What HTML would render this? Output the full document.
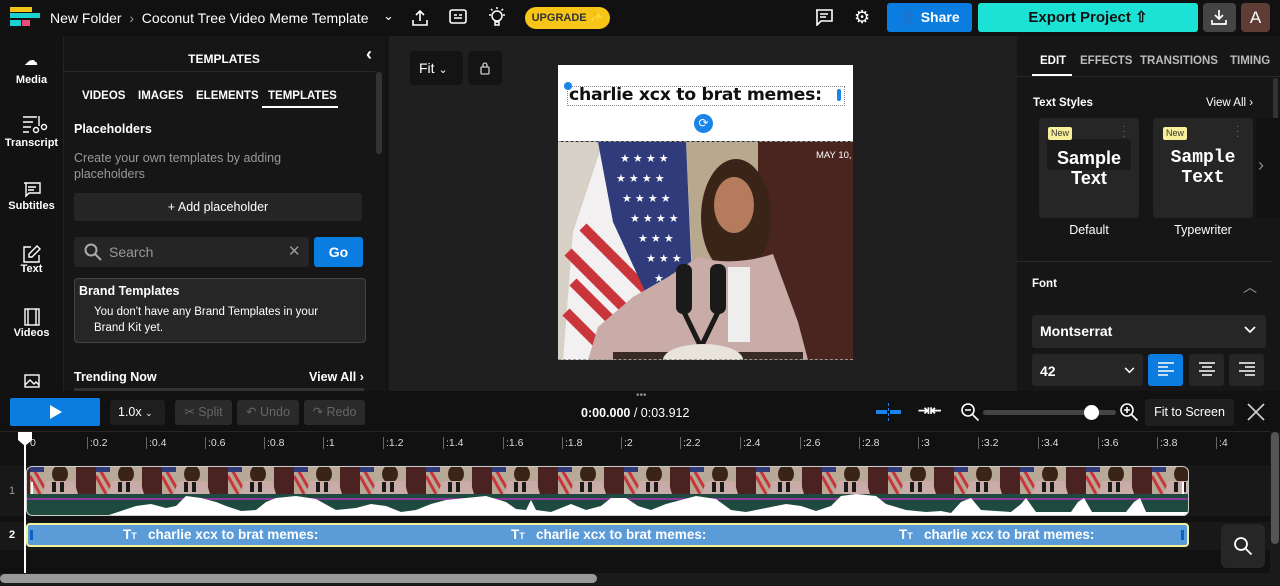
<!DOCTYPE html>
<html><head><meta charset="utf-8">
<style>
*{margin:0;padding:0;box-sizing:border-box}
body{width:1280px;height:586px;overflow:hidden;background:#111;font-family:"Liberation Sans",sans-serif;color:#fff;position:relative}
.a{position:absolute}
.b{font-weight:bold}
.t{white-space:nowrap}
</style></head><body>
<div class="a" style="left:0;top:0;width:1280px;height:36px;background:#111"></div>
<div class="a" style="left:10px;top:7px;width:22px;height:5px;background:#f2c318"></div>
<div class="a" style="left:10px;top:13px;width:30px;height:5px;background:#1ad3d1"></div>
<div class="a" style="left:10px;top:20px;width:11px;height:6px;background:#1ad3d1"></div>
<div class="a" style="left:22px;top:20px;width:8px;height:6px;background:#ef4a7b"></div>
<div class="a t" style="left:50px;top:10px;font-size:14px">New Folder <span style="color:#999">&nbsp;›&nbsp;</span> Coconut Tree Video Meme Template</div>
<div class="a" style="left:383px;top:8px;font-size:13px">⌄</div>
<svg class="a" style="left:410px;top:8px" width="20" height="20" viewBox="0 0 20 20" fill="none" stroke="#fff" stroke-width="1.6"><path d="M10 13V3M6 7l4-4 4 4M3 12v5h14v-5"/></svg>
<svg class="a" style="left:449px;top:9px" width="18" height="16" viewBox="0 0 18 16" fill="none" stroke="#fff" stroke-width="1.6"><rect x="1" y="1" width="16" height="13" rx="2"/><path d="M5 9h8M5 6h3M10 6h3"/></svg>
<svg class="a" style="left:487px;top:6px" width="20" height="22" viewBox="0 0 20 22" fill="none" stroke="#fff" stroke-width="1.5"><circle cx="10" cy="10" r="5"/><path d="M8 16h4v3h-4zM10 1v2M2 9h2M16 9h2M4 3l1.5 1.5M16 3l-1.5 1.5"/></svg>
<div class="a b" style="left:525px;top:7px;width:85px;height:22px;border-radius:11px;background:#f7c418;color:#333;font-size:11px;text-align:center;line-height:22px">UPGRADE ✨</div>
<svg class="a" style="left:815px;top:9px" width="18" height="17" viewBox="0 0 18 17" fill="none" stroke="#fff" stroke-width="1.6"><path d="M1 1h16v11H6l-4 4V1zM5 5h8M5 8h6"/></svg>
<div class="a" style="left:854px;top:7px;font-size:18px">⚙</div>
<div class="a b" style="left:887px;top:3px;width:85px;height:29px;border-radius:3px;background:#0b7de0;font-size:14px;line-height:29px;text-align:center">👤 Share</div>
<div class="a b" style="left:978px;top:3px;width:220px;height:29px;border-radius:3px;background:#1ce2d6;color:#111;font-size:15px;line-height:29px;text-align:center">Export Project ⇧</div>
<div class="a" style="left:1203px;top:3px;width:33px;height:29px;border-radius:4px;background:#444"></div>
<svg class="a" style="left:1210px;top:8px" width="18" height="18" viewBox="0 0 18 18" fill="none" stroke="#fff" stroke-width="1.7"><path d="M9 2v9M5 7l4 4 4-4M2 12v4h14v-4"/></svg>
<div class="a" style="left:1241px;top:3px;width:29px;height:29px;border-radius:4px;background:#5e3d34;text-align:center;line-height:29px;font-size:17px">A</div>

<div class="a" style="left:0;top:36px;width:63px;height:355px;background:#121212"></div>
<div class="a b" style="left:0;top:74px;width:63px;text-align:center;font-size:11px">Media</div>
<div class="a" style="left:24px;top:52px;font-size:14px">☁</div>
<div class="a b" style="left:0;top:137px;width:63px;text-align:center;font-size:11px">Transcript</div>
<svg class="a" style="left:22px;top:115px" width="26" height="20" viewBox="0 0 26 20" fill="none" stroke="#fff" stroke-width="1.4"><path d="M1 2h14M1 7h10M1 12h8M1 17h6M17 1v10"/><circle cx="14" cy="15" r="2.5"/><circle cx="22" cy="12" r="2.5"/></svg>
<div class="a b" style="left:0;top:200px;width:63px;text-align:center;font-size:11px">Subtitles</div>
<svg class="a" style="left:23px;top:182px" width="18" height="16" viewBox="0 0 18 16" fill="none" stroke="#fff" stroke-width="1.4"><path d="M1 1h16v10H6l-3 3V1zM5 5h8M5 8h6"/></svg>
<div class="a b" style="left:0;top:263px;width:63px;text-align:center;font-size:11px">Text</div>
<svg class="a" style="left:23px;top:245px" width="18" height="18" viewBox="0 0 18 18" fill="none" stroke="#fff" stroke-width="1.4"><path d="M8 2H1v15h15V10M14 1l3 3-8 8H6V9z"/></svg>
<div class="a b" style="left:0;top:327px;width:63px;text-align:center;font-size:11px">Videos</div>
<svg class="a" style="left:24px;top:308px" width="16" height="18" viewBox="0 0 16 18" fill="none" stroke="#fff" stroke-width="1.4"><rect x="1" y="1" width="14" height="16"/><path d="M4 1v16M12 1v16"/></svg>
<svg class="a" style="left:24px;top:374px" width="16" height="14" viewBox="0 0 16 14" fill="none" stroke="#fff" stroke-width="1.4"><rect x="1" y="1" width="14" height="12"/><path d="M1 11l5-5 4 4 2-2 3 3"/></svg>

<div class="a" style="left:63px;top:36px;width:322px;height:355px;background:#161616;border-left:1px solid #222"></div>
<div class="a b" style="left:63px;top:52px;width:322px;text-align:center;font-size:12px">TEMPLATES</div>
<div class="a b" style="left:366px;top:44px;font-size:18px">‹</div>
<div class="a" style="left:63px;top:71px;width:312px;height:1px;background:#2a2a2a"></div>
<div class="a" style="left:376px;top:72px;width:6px;height:82px;border-radius:3px;background:#333"></div>
<div class="a b t" style="left:82px;top:90px;font-size:11.5px">VIDEOS</div>
<div class="a b t" style="left:138px;top:90px;font-size:11.5px">IMAGES</div>
<div class="a b t" style="left:196px;top:90px;font-size:11.5px">ELEMENTS</div>
<div class="a b t" style="left:268px;top:90px;font-size:11.5px">TEMPLATES</div>
<div class="a" style="left:262px;top:106px;width:76px;height:2px;background:#fff"></div>
<div class="a b" style="left:74px;top:122px;font-size:12.5px">Placeholders</div>
<div class="a" style="left:74px;top:150px;font-size:12.5px;color:#999;line-height:16px;width:240px">Create your own templates by adding placeholders</div>
<div class="a" style="left:74px;top:193px;width:288px;height:28px;background:#252525;border-radius:3px;text-align:center;line-height:28px;font-size:12.5px">+ Add placeholder</div>
<div class="a" style="left:74px;top:237px;width:235px;height:30px;background:#252525;border-radius:3px"></div>
<svg class="a" style="left:84px;top:243px" width="18" height="18" viewBox="0 0 18 18" fill="none" stroke="#aaa" stroke-width="2"><circle cx="7" cy="7" r="5.5"/><path d="M11 11l6 6"/></svg>
<div class="a" style="left:109px;top:244px;font-size:14px;color:#999">Search</div>
<div class="a" style="left:288px;top:242px;font-size:15px;color:#999">✕</div>
<div class="a b" style="left:314px;top:237px;width:49px;height:30px;background:#0b7de0;border-radius:3px;text-align:center;line-height:30px;font-size:14px">Go</div>
<div class="a" style="left:74px;top:278px;width:292px;height:65px;background:#262626;border:1px solid #444;border-radius:4px"></div>
<div class="a b" style="left:79px;top:284px;font-size:12.5px">Brand Templates</div>
<div class="a" style="left:94px;top:304px;font-size:11.5px;line-height:16px;width:245px">You don't have any Brand Templates in your Brand Kit yet.</div>
<div class="a b" style="left:74px;top:370px;font-size:12.5px">Trending Now</div>
<div class="a b" style="left:309px;top:370px;font-size:12.5px">View All ›</div>
<div class="a" style="left:74px;top:388px;width:290px;height:3px;background:#333"></div>
<div class="a" style="left:385px;top:36px;width:4px;height:355px;background:#141414"></div>

<div class="a" style="left:389px;top:36px;width:628px;height:355px;background:#1f1f1f"></div>
<div class="a" style="left:410px;top:51px;width:53px;height:34px;background:#141414;border-radius:4px;font-size:14px;line-height:34px;padding-left:9px">Fit <span style="font-size:11px">⌄</span></div>
<div class="a" style="left:468px;top:51px;width:34px;height:34px;background:#141414;border-radius:4px"></div>
<svg class="a" style="left:479px;top:61px" width="12" height="14" viewBox="0 0 12 14" fill="none" stroke="#ccc" stroke-width="1.3"><rect x="2" y="6" width="8" height="7" rx="1"/><path d="M4 6V4a2 2 0 014 0v2"/></svg>
<div class="a" style="left:558px;top:65px;width:295px;height:76px;background:#fff"></div>
<div class="a" style="left:567px;top:86px;width:278px;height:20px;border:1px dotted #888"></div>
<div class="a b t" style="left:569px;top:85px;font-size:17.3px;color:#111;font-family:'DejaVu Sans',sans-serif;letter-spacing:-0.3px">charlie xcx to brat memes:</div>
<div class="a" style="left:564px;top:82px;width:8px;height:8px;border-radius:50%;background:#1b84e8"></div>
<div class="a" style="left:837px;top:89px;width:4px;height:12px;border-radius:2px;background:#1b84e8"></div>
<div class="a" style="left:694px;top:114px;width:19px;height:19px;border-radius:50%;background:#1b84e8;color:#fff;font-size:12px;text-align:center;line-height:19px">⟳</div>
<div class="a" style="left:558px;top:141px;width:295px;height:1px;border-top:1px dashed #999"></div>
<svg class="a" style="left:558px;top:142px" width="295" height="218" viewBox="0 0 295 218">
<rect width="295" height="218" fill="#a89a84"/>
<rect width="45" height="218" fill="#d6d0c6"/>
<rect x="200" width="95" height="218" fill="#4a2520"/>
<rect x="125" width="75" height="130" fill="#b8a88e"/>
<polygon points="45,0 128,0 135,150 95,218 5,218 15,90" fill="#f2f0f0"/>
<g stroke="#c9353a" stroke-width="10"><path d="M10 110l80 80M15 140l65 65M8 170l40 40M25 85l80 80"/></g>
<polygon points="40,0 128,0 135,160 92,160 55,80" fill="#2f3b7a"/>
<g fill="#fff" font-size="11"><text x="62" y="20">★ ★ ★ ★</text><text x="58" y="40">★ ★ ★ ★</text><text x="64" y="60">★ ★ ★ ★</text><text x="72" y="80">★ ★ ★ ★</text><text x="80" y="100">★ ★ ★</text><text x="88" y="120">★ ★ ★</text><text x="96" y="140">★ ★</text></g>
<ellipse cx="178" cy="75" rx="35" ry="58" fill="#3a2418"/>
<ellipse cx="176" cy="63" rx="20" ry="28" fill="#b47c5c"/>
<path d="M140 115 Q175 125 215 112 L240 180 L250 218 L30 218 L40 185 L75 155 L110 135 Z" fill="#c9aca8"/>
<rect x="170" y="125" width="22" height="75" fill="#eee"/>
<rect x="118" y="122" width="16" height="50" rx="7" fill="#1a1a1a"/>
<rect x="152" y="122" width="16" height="50" rx="7" fill="#1a1a1a"/>
<path d="M126 170 L143 205 L160 170" stroke="#1a1a1a" stroke-width="5" fill="none"/>
<rect x="55" y="210" width="190" height="8" fill="#3a2a24"/>
<ellipse cx="145" cy="218" rx="40" ry="16" fill="#e8e4dc"/>
<text x="258" y="16" font-size="9.5" fill="#fff" font-family="Liberation Sans">MAY 10,</text>
</svg>
<div class="a" style="left:558px;top:359px;width:295px;height:1px;border-top:1px dashed #999"></div>

<div class="a" style="left:1017px;top:36px;width:263px;height:355px;background:#161616"></div>
<div class="a b t" style="left:1040px;top:55px;font-size:11.5px">EDIT</div>
<div class="a b t" style="left:1080px;top:55px;font-size:11.5px;color:#bbb">EFFECTS</div>
<div class="a b t" style="left:1140px;top:55px;font-size:11.5px;color:#bbb">TRANSITIONS</div>
<div class="a b t" style="left:1230px;top:55px;font-size:11.5px;color:#bbb">TIMING</div>
<div class="a" style="left:1032px;top:74px;width:40px;height:2px;background:#fff"></div>
<div class="a" style="left:1017px;top:76px;width:263px;height:1px;background:#2a2a2a"></div>
<div class="a" style="left:1273px;top:78px;width:5px;height:110px;border-radius:3px;background:#333"></div>
<div class="a b" style="left:1033px;top:97px;font-size:11.5px">Text Styles</div>
<div class="a" style="left:1206px;top:97px;font-size:11.5px">View All ›</div>
<div class="a" style="left:1039px;top:118px;width:100px;height:100px;background:#262626;border-radius:4px"></div>
<div class="a" style="left:1047px;top:139px;width:84px;height:31px;background:#1a1a1a;border-radius:3px"></div>
<div class="a" style="left:1153px;top:118px;width:100px;height:100px;background:#262626;border-radius:4px"></div>
<div class="a" style="left:1256px;top:118px;width:24px;height:100px;background:#111"></div>
<div class="a" style="left:1258px;top:155px;font-size:18px;color:#888">›</div>
<div class="a" style="left:1048px;top:127px;font-size:9px;background:#f7ef9a;color:#333;padding:0 3px;border-radius:2px;line-height:13px">New</div>
<div class="a" style="left:1163px;top:127px;font-size:9px;background:#f7ef9a;color:#333;padding:0 3px;border-radius:2px;line-height:13px">New</div>
<div class="a" style="left:1122px;top:124px;color:#777;font-size:10px;line-height:5px">·<br>·<br>·</div>
<div class="a" style="left:1236px;top:124px;color:#777;font-size:10px;line-height:5px">·<br>·<br>·</div>
<div class="a b" style="left:1039px;top:148px;width:100px;text-align:center;font-size:18px;line-height:20px">Sample<br>Text</div>
<div class="a b" style="left:1153px;top:148px;width:100px;text-align:center;font-size:18px;line-height:20px;font-family:'Liberation Mono',monospace">Sample<br>Text</div>
<div class="a" style="left:1039px;top:223px;width:100px;text-align:center;font-size:12.5px">Default</div>
<div class="a" style="left:1153px;top:223px;width:100px;text-align:center;font-size:12.5px">Typewriter</div>
<div class="a" style="left:1017px;top:261px;width:255px;height:1px;background:#2a2a2a"></div>
<div class="a b" style="left:1032px;top:278px;font-size:11.5px">Font</div>
<div class="a" style="left:1243px;top:277px;font-size:14px;color:#999">︿</div>
<div class="a" style="left:1032px;top:315px;width:234px;height:33px;background:#262626;border-radius:3px"></div>
<div class="a b" style="left:1040px;top:323px;font-size:14px">Montserrat</div>
<svg class="a" style="left:1244px;top:326px" width="12" height="8" viewBox="0 0 12 8" fill="none" stroke="#fff" stroke-width="1.8"><path d="M1 1l5 5 5-5"/></svg>
<div class="a" style="left:1032px;top:354px;width:111px;height:32px;background:#262626;border-radius:3px"></div>
<div class="a b" style="left:1040px;top:363px;font-size:14px">42</div>
<svg class="a" style="left:1124px;top:367px" width="11" height="7" viewBox="0 0 12 8" fill="none" stroke="#fff" stroke-width="1.8"><path d="M1 1l5 5 5-5"/></svg>
<div class="a" style="left:1148px;top:354px;width:35px;height:32px;background:#0b7de0;border-radius:3px"></div>
<div class="a" style="left:1189px;top:354px;width:35px;height:32px;background:#262626;border-radius:3px"></div>
<div class="a" style="left:1229px;top:354px;width:35px;height:32px;background:#262626;border-radius:3px"></div>
<svg class="a" style="left:1158px;top:362px" width="16" height="14" stroke="#fff" stroke-width="1.5"><path d="M0 1h16M0 5h10M0 9h16M0 13h10"/></svg>
<svg class="a" style="left:1199px;top:362px" width="16" height="14" stroke="#fff" stroke-width="1.5"><path d="M0 1h16M3 5h10M0 9h16M3 13h10"/></svg>
<svg class="a" style="left:1239px;top:362px" width="16" height="14" stroke="#fff" stroke-width="1.5"><path d="M0 1h16M6 5h10M0 9h16M6 13h10"/></svg>

<div class="a" style="left:0;top:391px;width:1280px;height:195px;background:#111"></div>
<div class="a" style="left:636px;top:390px;color:#888;font-size:10px">•••</div>
<div class="a" style="left:10px;top:398px;width:90px;height:28px;background:#0b7de0;border-radius:2px"></div>
<svg class="a" style="left:49px;top:404px" width="14" height="16"><path d="M1 1l12 7-12 7z" fill="#fff"/></svg>
<div class="a" style="left:110px;top:400px;width:55px;height:25px;background:#1e1e1e;border-radius:3px;font-size:12.5px;line-height:25px;padding-left:8px">1.0x <span style="font-size:9px">⌄</span></div>
<div class="a" style="left:175px;top:400px;width:57px;height:25px;background:#2a2a2a;border-radius:3px;font-size:12.5px;line-height:25px;text-align:center;color:#666">✂ Split</div>
<div class="a" style="left:237px;top:400px;width:62px;height:25px;background:#2a2a2a;border-radius:3px;font-size:12.5px;line-height:25px;text-align:center;color:#666">↶ Undo</div>
<div class="a" style="left:304px;top:400px;width:61px;height:25px;background:#2a2a2a;border-radius:3px;font-size:12.5px;line-height:25px;text-align:center;color:#666">↷ Redo</div>
<div class="a t" style="left:581px;top:406px;font-size:12.5px"><b>0:00.000</b> / 0:03.912</div>
<div class="a" style="left:876px;top:410px;width:11px;height:4px;background:#1b84e8"></div>
<div class="a" style="left:890px;top:410px;width:11px;height:4px;background:#1b84e8"></div>
<div class="a" style="left:888px;top:403px;width:1px;height:18px;border-left:1px dashed #1b84e8"></div>
<div class="a b" style="left:918px;top:402px;font-size:14px">⇥⇤</div>
<svg class="a" style="left:960px;top:402px" width="20" height="20" fill="none" stroke="#fff" stroke-width="1.6"><circle cx="8" cy="8" r="6"/><path d="M12.5 12.5l6 6M5 8h6"/></svg>
<div class="a" style="left:983px;top:410px;width:133px;height:5px;border-radius:3px;background:#444"></div>
<div class="a" style="left:1084px;top:405px;width:15px;height:15px;border-radius:50%;background:#fff"></div>
<svg class="a" style="left:1119px;top:402px" width="20" height="20" fill="none" stroke="#fff" stroke-width="1.6"><circle cx="8" cy="8" r="6"/><path d="M12.5 12.5l6 6M5 8h6M8 5v6"/></svg>
<div class="a" style="left:1145px;top:399px;width:89px;height:27px;background:#1e1e1e;border-radius:3px;font-size:12.5px;line-height:27px;text-align:center">Fit to Screen</div>
<svg class="a" style="left:1247px;top:403px" width="18" height="18" stroke="#ccc" stroke-width="1.8"><path d="M1 1l16 16M17 1L1 17"/></svg>
<div class="a" style="left:0;top:431px;width:1270px;height:1px;background:#262626"></div>

<div class="a t" style="left:0;top:432px;width:1270px;height:25px;font-size:10.5px;color:#ddd">
<span class="a" style="left:30px;top:5px">0</span>
<span class="a" style="left:87px;top:5px;border-left:1px solid #666;padding-left:2px">:0.2</span>
<span class="a" style="left:146px;top:5px;border-left:1px solid #666;padding-left:2px">:0.4</span>
<span class="a" style="left:205px;top:5px;border-left:1px solid #666;padding-left:2px">:0.6</span>
<span class="a" style="left:264px;top:5px;border-left:1px solid #666;padding-left:2px">:0.8</span>
<span class="a" style="left:323px;top:5px;border-left:1px solid #666;padding-left:2px">:1</span>
<span class="a" style="left:383px;top:5px;border-left:1px solid #666;padding-left:2px">:1.2</span>
<span class="a" style="left:443px;top:5px;border-left:1px solid #666;padding-left:2px">:1.4</span>
<span class="a" style="left:503px;top:5px;border-left:1px solid #666;padding-left:2px">:1.6</span>
<span class="a" style="left:562px;top:5px;border-left:1px solid #666;padding-left:2px">:1.8</span>
<span class="a" style="left:621px;top:5px;border-left:1px solid #666;padding-left:2px">:2</span>
<span class="a" style="left:680px;top:5px;border-left:1px solid #666;padding-left:2px">:2.2</span>
<span class="a" style="left:740px;top:5px;border-left:1px solid #666;padding-left:2px">:2.4</span>
<span class="a" style="left:800px;top:5px;border-left:1px solid #666;padding-left:2px">:2.6</span>
<span class="a" style="left:859px;top:5px;border-left:1px solid #666;padding-left:2px">:2.8</span>
<span class="a" style="left:918px;top:5px;border-left:1px solid #666;padding-left:2px">:3</span>
<span class="a" style="left:978px;top:5px;border-left:1px solid #666;padding-left:2px">:3.2</span>
<span class="a" style="left:1038px;top:5px;border-left:1px solid #666;padding-left:2px">:3.4</span>
<span class="a" style="left:1098px;top:5px;border-left:1px solid #666;padding-left:2px">:3.6</span>
<span class="a" style="left:1157px;top:5px;border-left:1px solid #666;padding-left:2px">:3.8</span>
<span class="a" style="left:1216px;top:5px;border-left:1px solid #666;padding-left:2px">:4</span>
</div>
<div class="a" style="left:1270px;top:432px;width:10px;height:154px;background:#1a1a1a"></div>
<div class="a" style="left:1271px;top:432px;width:8px;height:112px;border-radius:4px;background:#555"></div>

<div class="a" style="left:0;top:465px;width:1270px;height:51px;background:#181818"></div>
<div class="a" style="left:0;top:522px;width:1270px;height:28px;background:#181818"></div>
<div class="a" style="left:9px;top:485px;font-size:11px;color:#999">1</div>
<div class="a b" style="left:9px;top:529px;font-size:11px">2</div>
<svg class="a" style="left:26px;top:466px" width="1163" height="50" viewBox="0 0 1163 50">
<defs>
<pattern id="th" x="4" y="0" width="66" height="28" patternUnits="userSpaceOnUse">
<rect width="66" height="28" fill="#4a2222"/>
<rect width="46" height="28" fill="#b8a896"/>
<path d="M0 10l10 18M4 4l14 24" stroke="#c9353a" stroke-width="3"/>
<rect x="0" y="0" width="14" height="6" fill="#2f3b7a"/>
<ellipse cx="30" cy="8" rx="8" ry="9" fill="#3a2418"/>
<path d="M12 28 L16 15 L44 15 L48 28Z" fill="#c9aca8"/>
<rect x="22" y="16" width="4" height="10" fill="#1a1a1a"/><rect x="30" y="16" width="4" height="10" fill="#1a1a1a"/>
</pattern>
<clipPath id="cl"><rect width="1163" height="50" rx="6"/></clipPath>
</defs>
<g clip-path="url(#cl)">
<rect width="1163" height="28" fill="url(#th)"/>
<rect y="28" width="1163" height="22" fill="#1f4a40"/>
<rect y="32" width="1163" height="2" fill="#8a3a9a"/>
<path d="M0 50 L80 50 L95 45 L110 40 L125 38 L140 42 L150 40 L160 30 L175 32 L190 36 L200 40 L215 45 L230 44 L240 36 L250 32 L270 30 L290 33 L310 44 L330 42 L345 38 L360 40 L375 46 L390 44 L405 38 L420 34 L440 32 L460 30 L480 36 L490 43 L500 44 L505 34 L510 44 L525 46 L545 38 L560 44 L575 40 L585 32 L600 32 L612 40 L625 44 L640 38 L655 34 L670 30 L690 33 L705 44 L720 46 L740 42 L760 38 L775 40 L790 45 L805 40 L815 30 L830 28 L850 30 L860 38 L880 44 L900 46 L915 45 L925 47 L935 36 L945 32 L955 44 L985 46 L995 38 L1000 32 L1010 46 L1045 46 L1052 36 L1058 32 L1066 46 L1100 46 L1108 36 L1114 32 L1120 46 L1163 46 L1163 50 Z" fill="#fff"/>
</g>
<rect x="0.5" y="0.5" width="1162" height="49" rx="6" fill="none" stroke="#ccc"/>
<rect x="5" y="16" width="2" height="12" fill="#fff"/>
<rect x="1156" y="16" width="2" height="12" fill="#fff"/>
</svg>
<div class="a" style="left:26px;top:523px;width:1163px;height:24px;background:#5a9bd8;border:2px solid #f2ef9a;border-radius:4px"></div>
<div class="a" style="left:30px;top:530px;width:3px;height:10px;background:#0b63c0"></div>
<div class="a" style="left:1181px;top:530px;width:3px;height:10px;background:#0b63c0"></div>
<div class="a b t" style="left:123px;top:527px;font-size:13.5px">T<span style="font-size:9px">T</span>&nbsp;&nbsp; charlie xcx to brat memes:</div>
<div class="a b t" style="left:511px;top:527px;font-size:13.5px">T<span style="font-size:9px">T</span>&nbsp;&nbsp; charlie xcx to brat memes:</div>
<div class="a b t" style="left:899px;top:527px;font-size:13.5px">T<span style="font-size:9px">T</span>&nbsp;&nbsp; charlie xcx to brat memes:</div>
<div class="a" style="left:1221px;top:524px;width:44px;height:44px;border-radius:6px;background:#262626"></div>
<svg class="a" style="left:1233px;top:536px" width="20" height="20" fill="none" stroke="#fff" stroke-width="1.8"><circle cx="8" cy="8" r="6"/><path d="M12.5 12.5l6 6"/></svg>
<div class="a" style="left:24px;top:432px;width:2px;height:154px;background:#fff"></div>
<svg class="a" style="left:18px;top:432px" width="14" height="14"><path d="M0 0h14v8l-7 6-7-6z" fill="#fff"/></svg>
<div class="a" style="left:0;top:573px;width:1270px;height:13px;background:#1a1a1a"></div>
<div class="a" style="left:0;top:574px;width:597px;height:9px;border-radius:5px;background:#999"></div>
</body></html>
